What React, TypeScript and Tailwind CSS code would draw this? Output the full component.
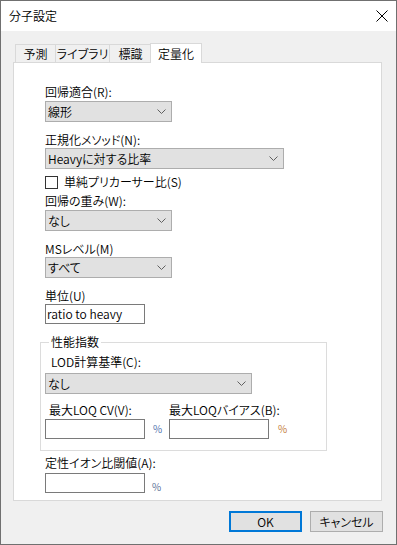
import React from 'react';

const Chevron = () => (
  <svg width="9" height="5" viewBox="0 0 9 5" className="shrink-0">
    <path d="M0.5 0.5 L4.5 4.5 L8.5 0.5" fill="none" stroke="#606060" strokeWidth="1" />
  </svg>
);

const Select = ({ value, className }: { value: string; className: string }) => (
  <div
    className={`flex h-[21px] items-center justify-between border border-[#adadad] bg-[#e1e1e1] pl-[2px] pr-[5px] text-[12px] leading-[16px] ${className}`}
  >
    <span>{value}</span>
    <Chevron />
  </div>
);

const Label = ({ children, className = '' }: { children: React.ReactNode; className?: string }) => (
  <div className={`h-[16px] text-[12px] leading-[16px] ${className}`}>{children}</div>
);

const Input = ({ value = '' }: { value?: string }) => (
  <div className="h-[20px] w-[100px] border border-[#7a7a7a] bg-white pl-[1px] text-[12px] leading-[18px]">
    {value}
  </div>
);

const tabs = [
  { name: '予測', w: 'w-[40px]' },
  { name: 'ライブラリ', w: 'w-[54px]' },
  { name: '標識', w: 'w-[42px]' },
];

export default function App() {
  return (
    <div className="flex h-[545px] w-[397px] flex-col border border-[#707070] bg-[#f0f0f0] font-['Noto_Sans_CJK_JP',sans-serif] font-[350] text-black [font-feature-settings:'palt']">
      {/* title bar */}
      <div className="flex h-[30px] shrink-0 items-center justify-between bg-white pl-[8px] pr-[8px]">
        <span className="text-[12px] leading-[16px]">分子設定</span>
        <svg width="12" height="12" viewBox="0 0 12 12">
          <path d="M0.5 0.5 L11.5 11.5 M11.5 0.5 L0.5 11.5" stroke="#000" strokeWidth="1" />
        </svg>
      </div>

      <div className="flex flex-1 flex-col pl-[12px] pt-[12px]">
        {/* tabs */}
        <div className="flex h-[19px] items-end pl-[2px]">
          {tabs.map((t) => (
            <div
              key={t.name}
              className={`flex h-[18px] items-center justify-center border-t border-l border-[#d9d9d9] text-[12px] leading-[16px] last:border-r ${t.w}`}
            >
              {t.name}
            </div>
          ))}
          <div className="relative z-10 -mb-[1px] -ml-[1px] flex h-[20px] w-[52px] items-center justify-center border-x border-t border-[#d9d9d9] bg-white text-[12px] leading-[16px]">
            定量化
          </div>
        </div>

        {/* panel */}
        <div className="flex h-[439px] w-[369px] flex-col border border-[#d9d9d9] bg-white pl-[31px]">
          <Label className="mt-[21px]">回帰適合(R):</Label>
          <Select value="線形" className="mt-[1px] w-[127px]" />

          <Label className="mt-[10px]">正規化メソッド(N):</Label>
          <Select value="Heavyに対する比率" className="w-[239px]" />

          <div className="mt-[5px] flex h-[16px] items-center gap-[6px] text-[12px] leading-[16px]">
            <div className="h-[13px] w-[13px] border border-[#333333] bg-white" />
            <span>単純プリカーサー比(S)</span>
          </div>

          <Label className="mt-[3px]">回帰の重み(W):</Label>
          <Select value="なし" className="mt-[1px] w-[127px]" />

          <Label className="mt-[10px]">MSレベル(M)</Label>
          <Select value="すべて" className="w-[127px]" />

          <Label className="mt-[10px]">単位(U)</Label>
          <Input value="ratio to heavy" />

          <fieldset className="mt-[10px] -ml-[5px] w-[287px] border border-[#dcdcdc] pb-[11px] pl-[4px]">
            <legend className="ml-[4px] px-[2px] text-[12px] leading-[16px]">性能指数</legend>
            <Label className="mt-[4px] ml-[6px]">LOD計算基準(C):</Label>
            <Select value="なし" className="mt-[3px] w-[207px]" />
            <div className="mt-[8px] flex">
              <Label className="ml-[4px] w-[120px]">最大LOQ CV(V):</Label>
              <Label>最大LOQバイアス(B):</Label>
            </div>
            <div className="mt-[1px] flex items-center">
              <Input />
              <span className="ml-[8px] w-[16px] text-[10px] leading-[12px] text-[#3f68a8]">%</span>
              <Input />
              <span className="ml-[9px] text-[10px] leading-[12px] text-[#c0742f]">%</span>
            </div>
          </fieldset>

          <Label className="mt-[4px]">定性イオン比閾値(A):</Label>
          <div className="mt-[2px] flex items-end">
            <Input />
            <span className="ml-[7px] text-[10px] leading-[12px] text-[#4f6790]">%</span>
          </div>
        </div>

        {/* buttons */}
        <div className="mt-[10px] flex justify-end gap-[8px] pr-[13px]">
          <button className="flex h-[21px] w-[73px] items-center justify-center border-2 border-[#0078d7] bg-[#e1e1e1] text-[12px] leading-[16px]">
            OK
          </button>
          <button className="flex h-[21px] w-[73px] items-center justify-center border border-[#adadad] bg-[#e1e1e1] text-[12px] leading-[16px]">
            キャンセル
          </button>
        </div>
      </div>
    </div>
  );
}
